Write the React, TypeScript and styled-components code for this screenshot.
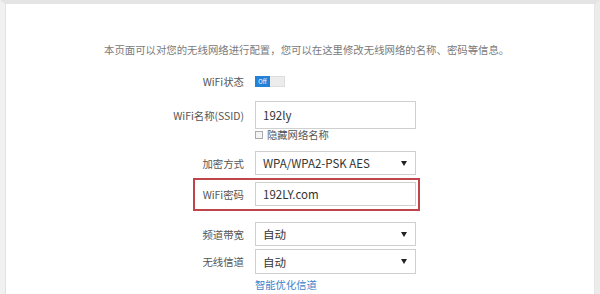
import React from "react";
import styled, { createGlobalStyle } from "styled-components";

const Global = createGlobalStyle`
  html, body { margin: 0; padding: 0; background: #fff; }
  body { width: 600px; height: 294px; overflow: hidden; font-family: "Noto Sans CJK SC", "Noto Sans", sans-serif; }
`;

const Frame = styled.div`
  width: 600px;
  height: 294px;
  box-sizing: border-box;
  border-top: 4px solid #e4e4e4;
  border-left: 5px solid #f1f1f1;
  border-right: 5px solid #ececec;
  background: #fff;
  overflow: hidden;
`;

const Panel = styled.div`
  border-left: 1px solid #e2e2e2;
  border-right: 1px solid #e6e6e6;
  height: 100%;
  box-sizing: border-box;
  padding-top: 39px;
`;

const Intro = styled.p`
  margin: 0 0 0 98px;
  font-size: 10.4px;
  line-height: 14px;
  color: #7a7a7a;
  white-space: nowrap;
`;

const Form = styled.div`
  display: flex;
  flex-direction: column;
  align-items: flex-start;
  margin-left: 98px;
  margin-top: 14px;
`;

const Row = styled.div<{ $h: number; $mt?: number }>`
  display: grid;
  grid-template-columns: 140px 161px;
  column-gap: 11px;
  align-items: center;
  height: ${(p) => p.$h}px;
  margin-top: ${(p) => p.$mt ?? 0}px;
`;

const HighlightRow = styled.div`
  display: grid;
  grid-template-columns: 49px 161px;
  column-gap: 11px;
  align-items: center;
  margin-left: 89px;
  margin-top: 3px;
  border: 2px solid #c0454b;
  padding: 2px 2px 3px 0;
  height: 24px;
`;

const Label = styled.span`
  text-align: right;
  font-size: 10.4px;
  color: #555;
  white-space: nowrap;
`;

const Field = styled.div<{ $h: number }>`
  box-sizing: border-box;
  height: ${(p) => p.$h}px;
  border: 1px solid #cfcfcf;
  background: #fff;
  display: flex;
  align-items: center;
  justify-content: space-between;
  padding: 0 8px 0 7px;
  font-size: 11.5px;
  color: #333;
`;

const Arrow = styled.span`
  width: 0;
  height: 0;
  border-left: 3px solid transparent;
  border-right: 3px solid transparent;
  border-top: 5px solid #222;
`;

const Toggle = styled.div`
  display: flex;
  width: 30px;
  height: 11px;
`;

const ToggleOn = styled.span`
  width: 15px;
  background: #2382d8;
  color: #fff;
  font-size: 6px;
  line-height: 11px;
  text-align: center;
`;

const ToggleOff = styled.span`
  flex: 1;
  background: #ececec;
  border: 1px solid #ddd;
  border-left: none;
`;

const Check = styled.label`
  display: flex;
  align-items: center;
  gap: 4px;
  font-size: 10.3px;
  color: #555;
`;

const Box = styled.span`
  width: 6px;
  height: 6px;
  border: 1px solid #aaa;
  background: #f4f4f4;
`;

const Link = styled.span`
  font-size: 10.3px;
  color: #3b82c8;
`;

const Empty = styled.span``;

export default function App() {
  return (
    <>
      <Global />
      <Frame>
        <Panel>
          <Intro>本页面可以对您的无线网络进行配置，您可以在这里修改无线网络的名称、密码等信息。</Intro>
          <Form>
            <Row $h={20}>
              <Label>WiFi状态</Label>
              <Toggle>
                <ToggleOn>Off</ToggleOn>
                <ToggleOff />
              </Toggle>
            </Row>
            <Row $h={28} $mt={10}>
              <Label>WiFi名称(SSID)</Label>
              <Field $h={28}>192ly</Field>
            </Row>
            <Row $h={14} $mt={-2}>
              <Empty />
              <Check>
                <Box />
                隐藏网络名称
              </Check>
            </Row>
            <Row $h={24} $mt={10}>
              <Label>加密方式</Label>
              <Field $h={24}>
                WPA/WPA2-PSK AES
                <Arrow />
              </Field>
            </Row>
            <HighlightRow>
              <Label>WiFi密码</Label>
              <Field $h={24}>192LY.com</Field>
            </HighlightRow>
            <Row $h={24} $mt={11}>
              <Label>频道带宽</Label>
              <Field $h={24}>
                自动
                <Arrow />
              </Field>
            </Row>
            <Row $h={25} $mt={3}>
              <Label>无线信道</Label>
              <Field $h={25}>
                自动
                <Arrow />
              </Field>
            </Row>
            <Row $h={16} $mt={2}>
              <Empty />
              <Link>智能优化信道</Link>
            </Row>
          </Form>
        </Panel>
      </Frame>
    </>
  );
}
